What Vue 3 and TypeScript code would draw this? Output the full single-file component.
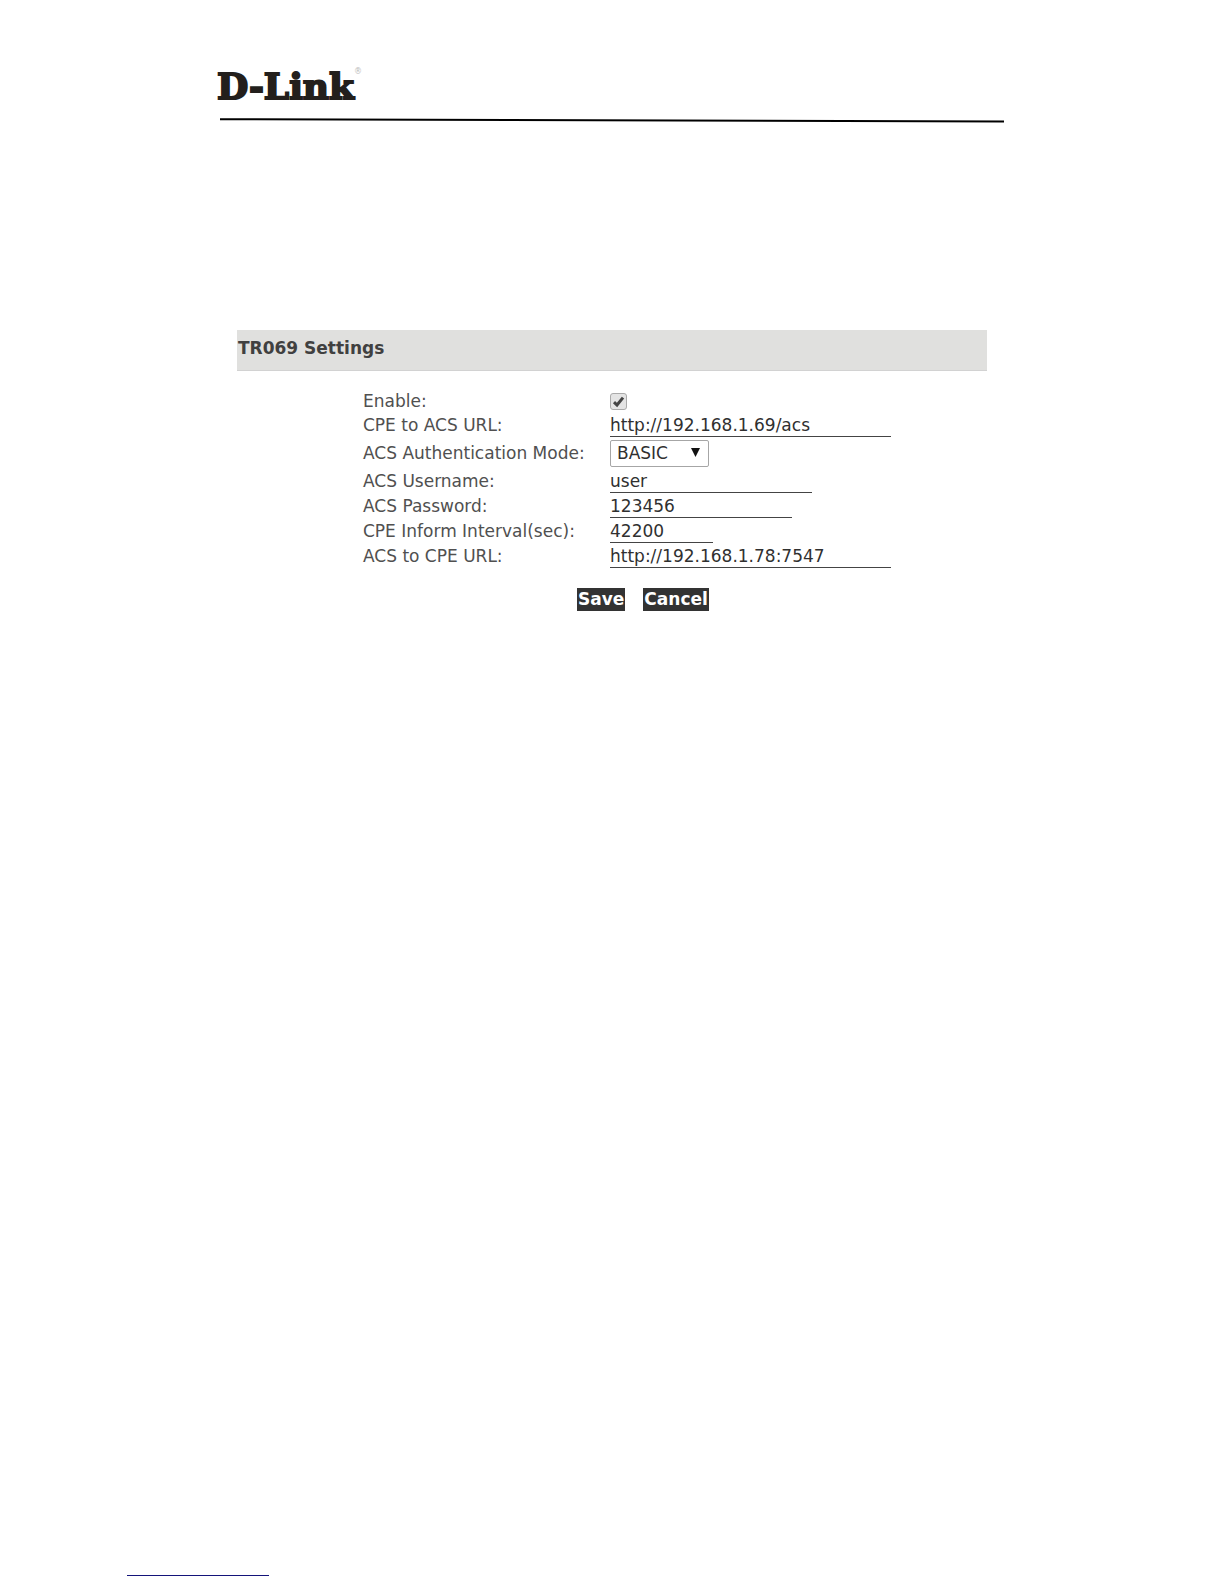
<script setup lang="ts">
import { reactive } from 'vue'

interface TextField {
  id: string
  label: string
  size: 'full' | 'wide' | 'medium' | 'short'
  value: string
}

const authModes: string[] = ['BASIC', 'DIGEST']

const general = reactive({ enabled: true, authMode: 'BASIC' })

const acsUrl = reactive<TextField>({
  id: 'acs-url',
  label: 'CPE to ACS URL:',
  size: 'full',
  value: 'http://192.168.1.69/acs',
})

const fields = reactive<TextField[]>([
  { id: 'acs-user', label: 'ACS Username:', size: 'wide', value: 'user' },
  { id: 'acs-pass', label: 'ACS Password:', size: 'medium', value: '123456' },
  { id: 'inform', label: 'CPE Inform Interval(sec):', size: 'short', value: '42200' },
  { id: 'cpe-url', label: 'ACS to CPE URL:', size: 'full', value: 'http://192.168.1.78:7547' },
])
</script>

<template>
  <div class="page">
    <header class="masthead">
      <div class="logo">D-Link<sup class="mark">®</sup></div>
      <svg class="rule" viewBox="0 0 784 5" preserveAspectRatio="none" aria-hidden="true">
        <path d="M0 1.2 L784 3.6" stroke="#000" stroke-width="2" />
      </svg>
    </header>

    <main class="panel">
      <h1 class="title">TR069 Settings</h1>
      <form class="form" @submit.prevent>
        <div class="row first">
          <label for="enable">Enable:</label>
          <span class="tick">
            <input id="enable" v-model="general.enabled" type="checkbox" />
            <svg v-if="general.enabled" class="check" viewBox="0 0 17 17" aria-hidden="true">
              <path d="M4 9.2 L7 12 L13 4.6" fill="none" stroke="#444" stroke-width="3" />
            </svg>
          </span>
        </div>
        <div class="row">
          <label :for="acsUrl.id">{{ acsUrl.label }}</label>
          <input :id="acsUrl.id" v-model="acsUrl.value" type="text" class="text full" />
        </div>
        <div class="row tall">
          <label for="mode">ACS Authentication Mode:</label>
          <span class="picker">
            <select id="mode" v-model="general.authMode">
              <option v-for="mode in authModes" :key="mode">{{ mode }}</option>
            </select>
            <svg class="arrow" viewBox="0 0 9 9" aria-hidden="true">
              <path d="M0 0 H9 L4.5 9 Z" fill="#111" />
            </svg>
          </span>
        </div>
        <div v-for="field in fields" :key="field.id" class="row">
          <label :for="field.id">{{ field.label }}</label>
          <input :id="field.id" v-model="field.value" type="text" class="text" :class="field.size" />
        </div>
        <div class="actions">
          <button type="submit">Save</button>
          <button type="button">Cancel</button>
        </div>
      </form>
    </main>

    <footer class="footer"><div class="footline"></div></footer>
  </div>
</template>

<style>
body {
  margin: 0;
  background: #fff;
}
</style>

<style scoped>
.page {
  box-sizing: border-box;
  min-height: 100vh;
  display: flex;
  flex-direction: column;
  padding-top: 64px;
  font: 17px/24px "DejaVu Sans", Verdana, sans-serif;
  color: #505050;
}
.masthead {
  width: 100%;
  max-width: 784px;
  margin: 0 auto;
}
.logo {
  display: flex;
  align-items: flex-start;
  height: 54px;
  margin-left: -3px;
  font: bold 36px/44px "DejaVu Serif", serif;
  color: #231f1c;
  -webkit-text-stroke: 2px #231f1c;
}
.mark {
  font: 8px/16px "DejaVu Sans", sans-serif;
  color: #bbb;
  -webkit-text-stroke: 0;
}
.rule {
  display: block;
  width: 100%;
  height: 5px;
}
.panel {
  width: 100%;
  max-width: 750px;
  margin: 207px auto 0;
}
.title {
  box-sizing: border-box;
  height: 41px;
  margin: 0;
  padding: 6px 1px;
  font-size: 17px;
  line-height: 24px;
  color: #404040;
  background: #e0e0de;
  border-bottom: 1px solid #d2d2d2;
}
.form {
  display: flex;
  flex-direction: column;
  gap: 1px;
  padding: 18px 0 0 126px;
}
.row {
  display: grid;
  grid-template-columns: 247px 1fr;
  align-items: center;
  height: 24px;
}
.row.first {
  height: 23px;
}
.row.tall {
  height: 30px;
}
.text {
  box-sizing: border-box;
  height: 24px;
  padding: 0;
  border: 0;
  border-bottom: 1px solid #444;
  font: inherit;
  color: #303030;
  background: transparent;
  outline: 0;
}
.full {
  width: 281px;
}
.wide {
  width: 202px;
}
.medium {
  width: 182px;
}
.short {
  width: 103px;
}
.tick,
.picker {
  position: relative;
  display: block;
}
.tick {
  width: 17px;
  height: 17px;
}
.tick input {
  appearance: none;
  display: block;
  box-sizing: border-box;
  width: 17px;
  height: 17px;
  margin: 0;
  border: 1px solid #aaa;
  border-radius: 3px;
  background: #e4e4e4;
}
.check {
  position: absolute;
  inset: 0;
  pointer-events: none;
}
.picker {
  width: 99px;
}
.picker select {
  appearance: none;
  display: block;
  box-sizing: border-box;
  width: 100%;
  height: 27px;
  padding: 0 6px;
  border: 1px solid #a6a6a6;
  border-radius: 2px;
  font: inherit;
  color: #303030;
  background: #fff;
}
.arrow {
  position: absolute;
  top: 8px;
  right: 9px;
  width: 9px;
  height: 9px;
  pointer-events: none;
}
.actions {
  display: flex;
  gap: 18px;
  padding: 19px 0 0 214px;
}
.actions button {
  height: 23px;
  padding: 0 1px 1px;
  border: 0;
  font: inherit;
  font-weight: bold;
  line-height: 22px;
  color: #fff;
  background: #333;
}
.footer {
  margin-top: auto;
  padding: 0 127px 8px;
}
.footline {
  width: 142px;
  height: 1px;
  background: #14147a;
}
</style>
